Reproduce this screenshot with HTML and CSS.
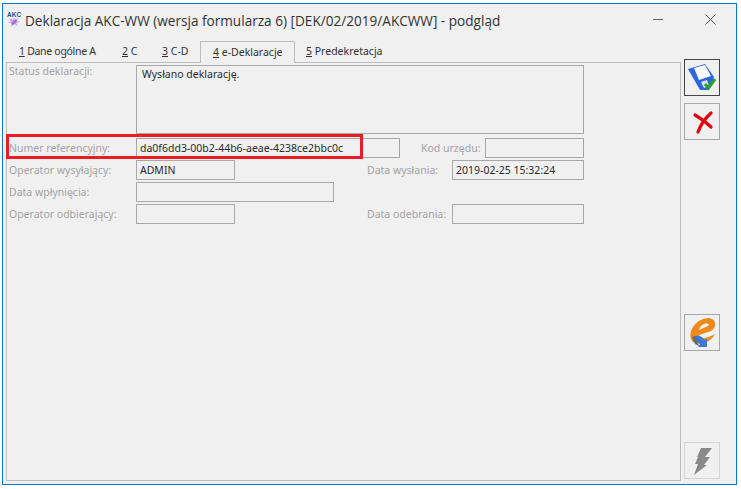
FILE: index.html
```html
<!DOCTYPE html>
<html lang="pl">
<head>
<meta charset="utf-8">
<title>Deklaracja AKC-WW</title>
<link rel="stylesheet" href="styles.css">
</head>
<body>
<div class="window">
  <header class="titlebar">
    <svg class="appicon" width="12" height="10" viewBox="0 0 12 10">
      <path d="M6 0 L7 3 L11 1 L8 4 L12 5 L8 6 L10 9 L6 7 L3 10 L4 6 L0 6 L3 4 L1 1 L5 3Z" fill="#c79ae6"/>
      <path d="M3 7 L8 2 L9 4 L5 8Z" fill="#9a68d2"/>
    </svg>
    <span class="akc">AKC</span>
    <span class="title">Deklaracja AKC-WW (wersja formularza 6) [DEK/02/2019/AKCWW] - podgląd</span>
    <svg class="min" width="11" height="2" viewBox="0 0 11 2"><rect width="10" height="1" fill="#666"/></svg>
    <svg class="close" width="11" height="11" viewBox="0 0 11 11"><path d="M.5.5l10 10M10.5.5l-10 10" stroke="#555" fill="none"/></svg>
  </header>
  <div class="body">
    <main class="content">
      <nav class="tabs">
        <span class="tab t1"><u>1</u> Dane ogólne A</span>
        <span class="tab t2"><u>2</u> C</span>
        <span class="tab t3"><u>3</u> C-D</span>
        <span class="tab active"><u>4</u> e-Deklaracje</span>
        <span class="tab t5"><u>5</u> Predekretacja</span>
      </nav>
      <section class="panel">
        <div class="row row-status">
          <label class="lab">Status deklaracji:</label>
          <div class="box status">Wysłano deklarację.</div>
        </div>
        <div class="row">
          <label class="lab">Numer referencyjny:</label>
          <div class="box w264">da0f6dd3-00b2-44b6-aeae-4238ce2bbc0c</div>
          <label class="lab2 kod">Kod urzędu:</label>
          <div class="box w99"></div>
        </div>
        <div class="row">
          <label class="lab">Operator wysyłający:</label>
          <div class="box w99">ADMIN</div>
          <label class="lab2 data">Data wysłania:</label>
          <div class="box w132">2019-02-25 15:32:24</div>
        </div>
        <div class="row">
          <label class="lab">Data wpłynięcia:</label>
          <div class="box w198"></div>
        </div>
        <div class="row">
          <label class="lab">Operator odbierający:</label>
          <div class="box w99"></div>
          <label class="lab2 data">Data odebrania:</label>
          <div class="box w132"></div>
        </div>
        <div class="highlight"></div>
      </section>
    </main>
    <aside class="side">
      <button class="btn focus" type="button">
        <svg width="34" height="35" viewBox="0 0 34 35">
          <path d="M3 9 L20 4 L29 17 L24 30 L15 30 Z" fill="#2f66d8"/>
          <path d="M9 8 L20 5 L26 16 L14 20 Z" fill="#fbfbfb"/>
          <path d="M16 22 L22 20 L24 26 L19 28 Z" fill="#dfe6f8"/>
          <path d="M20 24 L23.5 28 L30 19" fill="none" stroke="#2ca02c" stroke-width="3"/>
        </svg>
      </button>
      <button class="btn" type="button">
        <svg width="24" height="24" viewBox="0 0 24 24">
          <path d="M5 5 Q14 10 21 17" stroke="#e3000f" stroke-width="3.2" stroke-linecap="round" fill="none"/>
          <path d="M21 3 Q12 11 8 22" stroke="#e3000f" stroke-width="3.2" stroke-linecap="round" fill="none"/>
        </svg>
      </button>
      <button class="btn third" type="button">
        <svg width="32" height="32" viewBox="0 0 32 32">
          <path d="M5 22 C2 12 12 1 23 1 C31 2 31 11 25 14 L13 18 C14 22 20 22 29 17 C25 26 10 31 5 22Z M13 13 L22 9 C24 7 21 6 18 7 C15 8 14 10 13 13Z" fill="#ee8a1d" fill-rule="evenodd"/>
          <path d="M7 20 C12 17 17 20 18 23 L21 22 L21 30 L12 30 L14 27 C12 25 9 24 7 25Z" fill="#3b78d8"/>
          <path d="M6 20 L9 19 L13 29 L9 27Z" fill="#6b6b6b"/>
        </svg>
      </button>
      <button class="btn fourth" type="button">
        <svg width="24" height="30" viewBox="0 0 24 30">
          <path d="M11 2 L22 2 L15 11 L20 11 L14 19 L17 19 L4 29 L8 18 L5 18 L8 11 L7 11Z" fill="#8a8a8a"/>
        </svg>
      </button>
    </aside>
  </div>
</div>
</body>
</html>
```
FILE: styles.css
```css
* { box-sizing: border-box; }
html, body { margin: 0; height: 100%; background: #fff; }
body { padding: 3px 4px 4px 2px; font-family: "Noto Sans", "Liberation Sans", sans-serif; font-size: 10.5px; color: #2b2b2b; }
.window { height: 100%; border: 1px solid #0a78d0; background: #f0f0f0; display: flex; flex-direction: column; position: relative; }
.titlebar { height: 36px; display: flex; align-items: center; position: relative; padding: 0 0 4px 22px; }
.appicon { position: absolute; left: 5px; top: 13px; }
.akc { position: absolute; left: 4px; top: 7px; font: bold 6.5px/8px "Liberation Sans", sans-serif; color: #1f4e96; }
.title { font-family: "Open Sans", "Liberation Sans", sans-serif; font-size: 13.6px; color: #333; flex: 1; white-space: nowrap; }
.min { margin-right: 41px; }
.close { margin: -2px 20px 0 0; }
.body { flex: 1; display: flex; padding: 0 16px 3px 3px; min-height: 0; }
.content { flex: 1; display: flex; flex-direction: column; min-width: 0; margin-right: 3px; }
.tabs { display: flex; height: 22px; align-items: flex-end; }
.tab { height: 20px; line-height: 19px; white-space: nowrap; color: #333; flex: none; }
.t1 { width: 110px; padding-left: 13px; letter-spacing: -0.3px; }
.t2 { width: 40px; padding-left: 6px; }
.t3 { width: 44px; padding-left: 6px; }
.t5 { padding-left: 11px; }
.active { width: 95px; height: 22px; line-height: 21px; padding-left: 12px; background: #f0f0f0; border: 1px solid #bdbdbd; border-bottom: 0; position: relative; top: 1px; z-index: 1; }
.panel { flex: 1; border: 1px solid #bdbdbd; position: relative; padding-top: 2px; }
.row { display: flex; height: 22px; align-items: flex-start; }
.row-status { height: 73px; }
.lab { width: 129px; padding-left: 2px; color: #a3a3a3; line-height: 20px; flex: none; white-space: nowrap; }
.row-status .lab { line-height: 13px; }
.lab2 { color: #a3a3a3; line-height: 20px; white-space: nowrap; flex: none; }
.kod { margin-left: 21px; width: 64px; }
.data { margin-left: 132px; width: 85px; }
.box { height: 20px; border: 1px solid #a8a8a8; padding-left: 3px; line-height: 19px; white-space: nowrap; flex: none; }
.status { width: 448px; height: 69px; padding-left: 5px; line-height: 17px; }
.w264 { width: 264px; }
.w99 { width: 99px; }
.w132 { width: 132px; }
.w198 { width: 198px; }
.highlight { position: absolute; left: -1px; top: 71px; width: 357px; height: 25px; border: 3px solid #ed1c24; }
.side { width: 36px; display: flex; flex-direction: column; gap: 7px; flex: none; padding: 19px 0 2px; }
.btn { width: 36px; height: 37px; padding: 0; border: 1px solid #a8a8a8; background: #f0f0f0; display: flex; align-items: center; justify-content: center; flex: none; }
.focus { border-color: #444; }
.third { margin-top: 167px; }
.fourth { margin-top: auto; border-color: #d4d4d4; }
```
